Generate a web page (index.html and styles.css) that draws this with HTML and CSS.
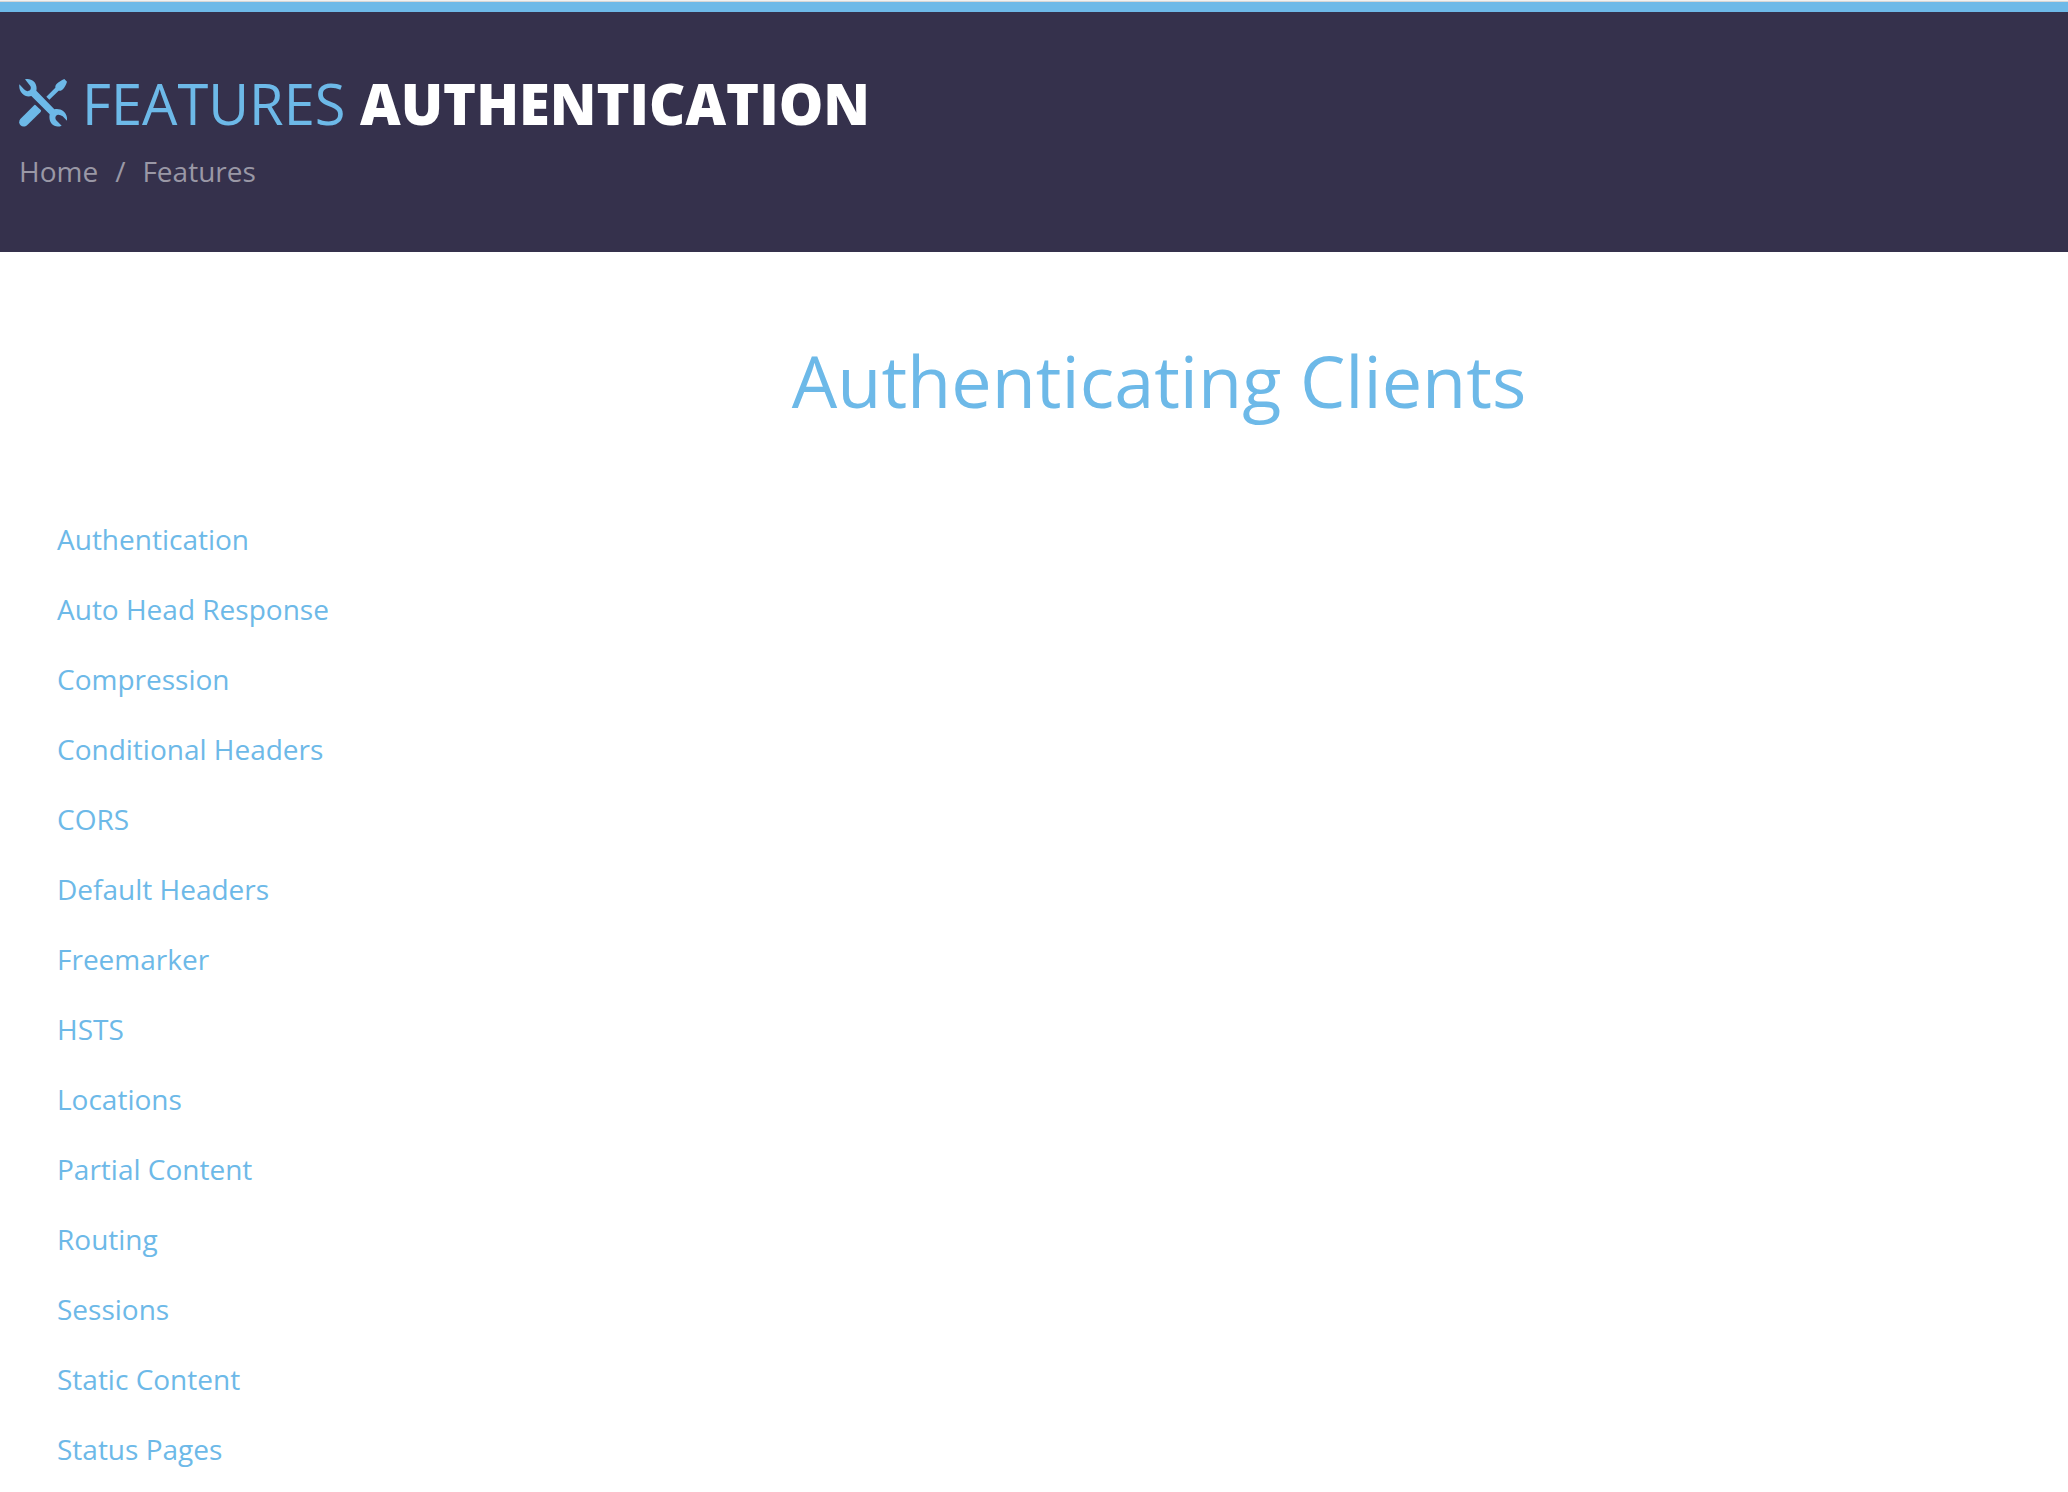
FILE: index.html
```html
<!DOCTYPE html>
<html lang="en">

<head>
    <meta charset="UTF-8">
    <title>Authentication - Features</title>
    <link rel="stylesheet" href="styles.css">
</head>

<body>
    <div class="top-line"></div>
    <header class="page-header">
        <h1 class="page-title">
            <svg class="icon" viewBox="57 57 144 144" aria-hidden="true">
                <!-- screwdriver -->
                <path d="M139 110 L166 83 C165 73 174 66 193 57 L201 65 C194 85 186 94 176 92 L148 119 Z"/>
                <path d="M104 134 Q107 134 123 151 Q124 154 121 157 L82 195 C68 208 50 192 61 177 Z"/>
                <!-- wrench -->
                <path d="M75 58 C94 53 114 68 109 92 L163 148 C181 143 204 156 201 182 L188 169 Q178 162 171 165 Q163 171 168 180 L185 197 C164 206 144 190 149 163 L94 108 C76 114 55 98 58 73 L72 88 Q80 97 90 91 Q96 82 88 74 Z"/>
            </svg>
            <span>Features <strong>Authentication</strong></span>
        </h1>
        <ul class="breadcrumb">
            <li><a href="#">Home</a></li>
            <li>/</li>
            <li><a href="#">Features</a></li>
        </ul>
    </header>
    <main class="content">
        <h2 class="content-title">Authenticating Clients</h2>
        <nav>
            <ul class="side-nav">
                <li><a href="#">Authentication</a></li>
                <li><a href="#">Auto Head Response</a></li>
                <li><a href="#">Compression</a></li>
                <li><a href="#">Conditional Headers</a></li>
                <li><a href="#">CORS</a></li>
                <li><a href="#">Default Headers</a></li>
                <li><a href="#">Freemarker</a></li>
                <li><a href="#">HSTS</a></li>
                <li><a href="#">Locations</a></li>
                <li><a href="#">Partial Content</a></li>
                <li><a href="#">Routing</a></li>
                <li><a href="#">Sessions</a></li>
                <li><a href="#">Static Content</a></li>
                <li><a href="#">Status Pages</a></li>
            </ul>
        </nav>
    </main>
</body>

</html>
```
FILE: styles.css
```css
body {
    margin: 0;
    background: #fff;
    color: #6db9e8;
    font-family: "Open Sans", sans-serif;
    font-size: 28px;
    line-height: 40px;
}

ul {
    list-style: none;
    margin: 0;
    padding: 0;
}

a {
    color: inherit;
    text-decoration: none;
}

a:hover {
    text-decoration: underline;
}

.top-line {
    height: 1px;
    background: #f1f1f1;
    border-bottom: 1px solid #d6d6d6;
}

.page-header {
    border-top: 10px solid #6db9e8;
    background: #35314c;
    padding: 59px 19px 61px;
}

.page-title {
    display: flex;
    align-items: center;
    gap: 15px;
    margin: 0;
    font-size: 56px;
    font-weight: 400;
    line-height: 64px;
    text-transform: uppercase;
}

.page-title strong {
    color: #fff;
    font-weight: 800;
}

.icon {
    width: 48px;
    height: 48px;
    fill: #6db9e8;
}

.breadcrumb {
    display: flex;
    gap: 17px;
    padding-top: 16px;
    color: #9a98a6;
}

.content-title {
    margin: 0;
    padding: 78px 0 74px 250px;
    font-size: 72px;
    font-weight: 400;
    line-height: 100px;
    text-align: center;
}

.side-nav {
    padding-left: 57px;
}

.side-nav a {
    display: inline-block;
    padding: 15px 0;
}

.side-nav li {
    height: 70px;
}
```
